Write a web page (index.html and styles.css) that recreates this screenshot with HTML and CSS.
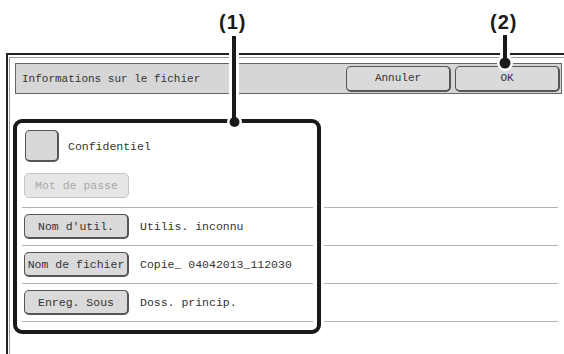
FILE: index.html
```html
<!DOCTYPE html>
<html lang="fr">
<head>
<meta charset="utf-8">
<title>Informations sur le fichier</title>
<link rel="stylesheet" href="styles.css">
</head>
<body>
<div class="page">
  <div class="screen">
    <div class="screen-inner">
      <div class="header">
        <span class="title">Informations sur le fichier</span>
        <div class="header-actions">
          <button class="btn btn-head">Annuler</button>
          <button class="btn btn-head">OK</button>
        </div>
      </div>
      <div class="rows">
        <div class="row row-check">
          <span class="checkbox"></span>
          <span class="label label-check">Confidentiel</span>
        </div>
        <div class="row row-pass">
          <button class="btn btn-row btn-disabled">Mot de passe</button>
        </div>
        <div class="row">
          <button class="btn btn-row">Nom d'util.</button>
          <span class="label">Utilis. inconnu</span>
        </div>
        <div class="row">
          <button class="btn btn-row">Nom de fichier</button>
          <span class="label">Copie_ 04042013_112030</span>
        </div>
        <div class="row">
          <button class="btn btn-row">Enreg. Sous</button>
          <span class="label">Doss. princip.</span>
        </div>
      </div>
    </div>
  </div>

  <div class="highlight"></div>
  <span class="callout callout-1">(1)</span>
  <span class="callout callout-2">(2)</span>
  <svg class="leaders" width="564" height="354" viewBox="0 0 564 354">
    <line x1="234" y1="36" x2="234" y2="121" stroke="#fff" stroke-width="10"/>
    <circle cx="234.5" cy="122" r="7.5" fill="#fff"/>
    <line x1="234" y1="36" x2="234" y2="121" stroke="#1a1a1a" stroke-width="4"/>
    <circle cx="234.5" cy="122" r="5" fill="#1a1a1a"/>
    <line x1="505" y1="35" x2="505" y2="62" stroke="#fff" stroke-width="10"/>
    <circle cx="505" cy="63" r="8" fill="#fff"/>
    <line x1="505" y1="35" x2="505" y2="62" stroke="#1a1a1a" stroke-width="4"/>
    <circle cx="505" cy="63" r="5.5" fill="#1a1a1a"/>
  </svg>
</div>
</body>
</html>
```
FILE: styles.css
```css
html, body {
  margin: 0;
  padding: 0;
  background: #fff;
}

.page {
  position: relative;
  width: 564px;
  height: 354px;
  overflow: hidden;
  font-family: "Liberation Mono", "DejaVu Sans Mono", monospace;
  color: #333;
}

.screen {
  margin: 53px 0 0 6px;
  height: 301px;
  box-sizing: border-box;
  border-top: 2px solid #222;
  border-left: 2px solid #222;
  padding: 2px 0 0 1px;
}

.screen-inner {
  height: 100%;
  box-sizing: border-box;
  border-top: 1px solid #9a9a9a;
  border-left: 1px solid #9a9a9a;
  padding: 5px 2px 0 5px;
}

.header {
  height: 31px;
  box-sizing: border-box;
  background: #d6d6d6;
  border: 1px solid #666;
  display: flex;
  align-items: center;
  justify-content: space-between;
  padding: 0 1px 0 6px;
}

.title {
  font-size: 11px;
  color: #333;
  padding-top: 1px;
}

.header-actions {
  display: flex;
  gap: 4px;
}

.btn {
  font-family: "Liberation Mono", "DejaVu Sans Mono", monospace;
  color: #333;
  background: #dadada;
  border: 1px solid #555;
  border-right-width: 2px;
  border-bottom-width: 2px;
  border-radius: 5px;
  padding: 0;
  box-sizing: border-box;
  display: flex;
  align-items: center;
  justify-content: center;
}

.btn-head {
  width: 105px;
  height: 26px;
  font-size: 11px;
}

.rows {
  margin: 32px 4px 0 7px;
}

.row {
  display: flex;
  align-items: center;
  height: 38px;
  box-sizing: border-box;
  border-bottom: 1px solid #b4b4b4;
  padding-left: 2px;
}

.row-check {
  height: 40px;
  border-bottom: none;
  padding-left: 3px;
}

.row-pass {
  height: 42px;
  padding-bottom: 2px;
}

.checkbox {
  width: 34px;
  height: 32px;
  box-sizing: border-box;
  background: #d8d8d8;
  border: 1px solid #555;
  border-right-width: 2px;
  border-bottom-width: 2px;
  border-radius: 5px;
}

.btn-row {
  width: 105px;
  height: 25px;
  font-size: 11.5px;
}

.btn-disabled {
  background: #e6e6e6;
  border: 1px solid #c4c4c4;
  color: #a8a8a8;
}

.label {
  font-size: 11.5px;
  margin-left: 11px;
  color: #333;
}

.label-check {
  margin-left: 9px;
}

.highlight {
  position: absolute;
  left: 13px;
  top: 119px;
  width: 308px;
  height: 215px;
  box-sizing: border-box;
  border: 4px solid #1a1a1a;
  border-radius: 9px;
  box-shadow: 0 0 0 3px #fff, inset 0 0 0 4px #fff;
}

.callout {
  position: absolute;
  top: 12px;
  font-family: "Liberation Sans", Arial, sans-serif;
  font-weight: bold;
  font-size: 20px;
  line-height: 20px;
  letter-spacing: 1px;
  color: #1a1a1a;
}

.callout-1 {
  left: 219px;
}

.callout-2 {
  left: 490px;
}

.leaders {
  position: absolute;
  left: 0;
  top: 0;
}
```
